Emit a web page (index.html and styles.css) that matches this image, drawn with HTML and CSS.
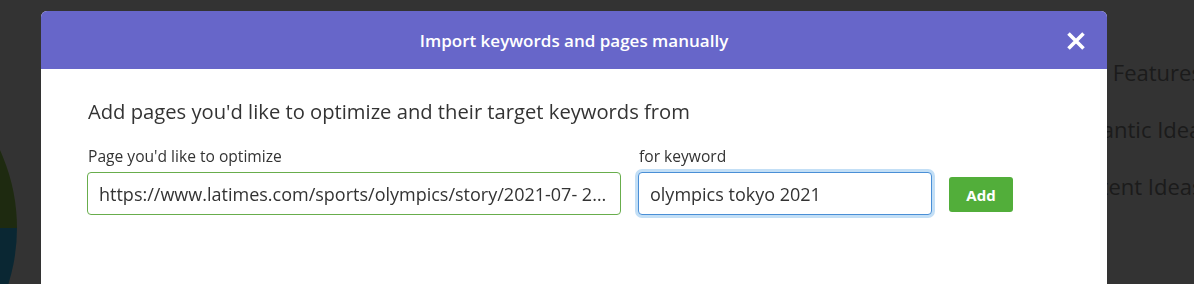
FILE: index.html
```html
<!DOCTYPE html>
<html>
<head>
    <title>Import keywords and pages manually</title>
    <link rel="stylesheet" href="styles.css">
</head>
<body>
    <div class="page">
        <div class="chart"></div>
        <ul class="side-tabs">
            <li class="tab-serp">SERP Features</li>
            <li class="tab-semantic">Semantic Ideas</li>
            <li class="tab-content">Content Ideas</li>
        </ul>
    </div>

    <div class="overlay">
        <div class="modal">
            <div class="modal-header">
                <span class="modal-title">Import keywords and pages manually</span>
                <button class="close-btn" aria-label="Close">
                    <svg width="22" height="22" viewBox="0 0 22 22">
                        <path d="M3.5 3.5 L18.5 18.5 M18.5 3.5 L3.5 18.5" stroke="#fff" stroke-width="3.6" stroke-linecap="butt" fill="none"/>
                    </svg>
                </button>
            </div>
            <div class="modal-body">
                <h2>Add pages you'd like to optimize and their target keywords from</h2>
                <div class="form-row">
                    <label class="field field-page">
                        <span class="field-label">Page you'd like to optimize</span>
                        <input type="text" class="input input-page" value="https://www.latimes.com/sports/olympics/story/2021-07- 23/tokyo-olympics-opening-ceremony">
                    </label>
                    <label class="field field-keyword">
                        <span class="field-label">for keyword</span>
                        <input type="text" class="input input-keyword" value="olympics tokyo 2021">
                    </label>
                    <button class="add-btn">Add</button>
                </div>
            </div>
        </div>
    </div>
</body>
</html>
```

FILE: styles.css
```css
* {
    box-sizing: border-box;
}

body {
    margin: 0;
    height: 284px;
    overflow: hidden;
    background: #fff;
    font-family: "Open Sans", "Noto Sans", Arial, sans-serif;
    color: #333;
}

.page {
    display: flex;
    justify-content: space-between;
    height: 284px;
}

.chart {
    width: 374px;
    height: 374px;
    margin: 41px 0 0 -357px;
    border-radius: 50%;
    background: linear-gradient(to bottom, #96d250 50%, #32c3ff 50%);
    flex-shrink: 0;
}

.side-tabs {
    list-style: none;
    margin: 0;
    padding: 57px 0 0 0;
    width: 138px;
    font-size: 22px;
    color: #888;
    white-space: nowrap;
}

.side-tabs li {
    height: 57px;
    line-height: 30px;
}

.tab-serp {
    margin-left: 0;
}

.tab-semantic {
    margin-left: 1px;
}

.tab-content {
    margin-left: 4px;
}

.overlay {
    position: fixed;
    inset: 0;
    background: rgba(0, 0, 0, 0.8);
}

.modal {
    position: absolute;
    left: 41px;
    top: 11px;
    width: 1066px;
    height: 320px;
    background: #fff;
    border-radius: 6px 6px 0 0;
    overflow: hidden;
}

.modal-header {
    height: 58px;
    background: #6766c9;
    display: flex;
    align-items: center;
    justify-content: center;
    position: relative;
}

.modal-title {
    color: #fff;
    font-size: 17px;
    font-weight: 600;
}

.close-btn {
    position: absolute;
    right: 20px;
    top: 19px;
    width: 22px;
    height: 22px;
    padding: 0;
    border: none;
    background: none;
    cursor: pointer;
}

.close-btn svg {
    display: block;
}

.modal-body {
    padding: 28px 46px 0 46px;
}

.modal-body h2 {
    margin: 0 0 21px 1px;
    font-size: 20.2px;
    font-weight: 400;
    line-height: 28px;
    color: #333;
}

.form-row {
    display: flex;
    align-items: flex-end;
}

.field {
    display: flex;
    flex-direction: column;
}

.field-label {
    font-size: 15.6px;
    line-height: 20px;
    margin-bottom: 6px;
    margin-left: 1px;
    color: #333;
}

.field-page {
    width: 534px;
}

.field-keyword {
    width: 294px;
    margin-left: 17px;
}

.input {
    height: 43px;
    padding: 0 11px;
    font-family: inherit;
    font-size: 18px;
    color: #333;
    border-radius: 4px;
    outline: none;
    background: #fff;
    text-overflow: ellipsis;
}

.input-page {
    border: 1px solid #68ad4c;
}

.input-keyword {
    border: 1px solid #4a8fd6;
    box-shadow: 0 0 0 3px #c3dff6;
}

.add-btn {
    width: 64px;
    height: 35px;
    margin: 0 0 3px 17px;
    border: none;
    border-radius: 3px;
    background: #52ae3a;
    color: #fff;
    font-family: inherit;
    font-size: 15px;
    font-weight: 700;
    cursor: pointer;
}
```
